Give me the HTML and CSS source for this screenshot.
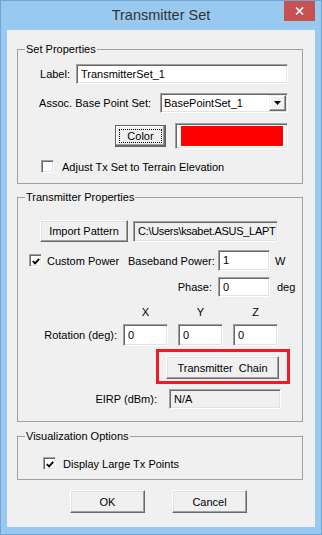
FILE: index.html
```html
<!DOCTYPE html>
<html>
<head>
<meta charset="utf-8">
<title>Transmitter Set</title>
<link rel="stylesheet" href="styles.css">
</head>
<body>
<div class="window">
  <div class="titlebar">
    <div class="title">Transmitter Set</div>
    <div class="close">
      <svg width="9" height="8" viewBox="0 0 9 8"><path d="M1 0.5 L8 7.5 M8 0.5 L1 7.5" stroke="#fff" stroke-width="1.7" fill="none"/></svg>
    </div>
  </div>

  <div class="client">
    <!-- set properties -->
    <fieldset class="group">
      <legend>Set Properties</legend>
      <div class="row row-label">
        <span class="lbl lbl-label">Label:</span>
        <div class="edit edit-label">TransmitterSet_1</div>
      </div>
      <div class="row row-base">
        <span class="lbl lbl-base">Assoc. Base Point Set:</span>
        <div class="combo">
          <span class="combo-text">BasePointSet_1</span>
          <span class="combo-btn"><svg width="7" height="4" viewBox="0 0 7 4"><path d="M0 0 H7 L3.5 4 Z" fill="#000"/></svg></span>
        </div>
      </div>
      <div class="row row-color">
        <div class="btn btn-color"><span class="focus">Color</span></div>
        <div class="swatch"><div class="swatch-fill"></div></div>
      </div>
      <div class="row row-adjust">
        <span class="check"></span>
        <span>Adjust Tx Set to Terrain Elevation</span>
      </div>
    </fieldset>

    <!-- transmitter properties -->
    <fieldset class="group group-tx">
      <legend>Transmitter Properties</legend>
      <div class="row row-import">
        <div class="btn btn-import">Import Pattern</div>
        <div class="path">C:\Users\ksabet.ASUS_LAPT</div>
      </div>
      <div class="row row-power">
        <div class="power-check">
          <span class="check"><svg width="11" height="11" viewBox="0 0 11 11"><path d="M2 5 L4.5 7.5 L9 2.5" stroke="#000" stroke-width="2" fill="none"/></svg></span>
          <span>Custom Power</span>
        </div>
        <span class="lbl lbl-power">Baseband Power:</span>
        <div class="edit edit-power">1</div>
        <span class="unit">W</span>
      </div>
      <div class="row row-phase">
        <span class="lbl lbl-power">Phase:</span>
        <div class="edit edit-phase">0</div>
        <span class="unit unit-deg">deg</span>
      </div>
      <div class="row row-xyz">
        <span class="axis">X</span>
        <span class="axis">Y</span>
        <span class="axis">Z</span>
      </div>
      <div class="row row-rot">
        <span class="lbl lbl-rot">Rotation (deg):</span>
        <div class="edit edit-rot">0</div>
        <div class="edit edit-rot">0</div>
        <div class="edit edit-rot">0</div>
      </div>
      <div class="row row-chain">
        <div class="mark">
          <div class="btn btn-chain">Transmitter&nbsp; Chain</div>
        </div>
      </div>
      <div class="row row-eirp">
        <span class="lbl lbl-eirp">EIRP (dBm):</span>
        <div class="na">N/A</div>
      </div>
    </fieldset>

    <!-- visualization -->
    <fieldset class="group group-vis">
      <legend>Visualization Options</legend>
      <div class="row row-vis">
        <span class="check"><svg width="11" height="11" viewBox="0 0 11 11"><path d="M2 5 L4.5 7.5 L9 2.5" stroke="#000" stroke-width="2" fill="none"/></svg></span>
        <span>Display Large Tx Points</span>
      </div>
    </fieldset>

    <div class="row row-buttons">
      <div class="btn btn-dlg">OK</div>
      <div class="btn btn-dlg">Cancel</div>
    </div>
  </div>
</div>
</body>
</html>
```

FILE: styles.css
```css
*{ margin:0; padding:0; box-sizing:border-box; }
body{ font:11px "Liberation Sans", Arial, sans-serif; color:#000; }

.window{
  width:322px;
  height:535px;
  background:#99c9ef;
  border:1px solid #6fa4d4;
  padding:0 6px 7px;
  display:flex;
  flex-direction:column;
}
.titlebar{ height:29px; margin:0 -6px; display:grid; grid-template-columns:1fr auto 1fr; }
.title{ grid-column:2; font-size:14.5px; line-height:29px; color:#333; }
.close{
  grid-column:3; justify-self:end; align-self:start;
  width:31px; height:20px; margin-right:6px;
  background:#c75050;
  display:flex; align-items:center; justify-content:center;
}

.client{ flex:1; background:#f0f0f0; padding-top:12px; }

.group{ border:1px solid #a0a0a0; margin:0 12px 0 10px; padding:0 0 10px; min-width:0; }
.group legend{ margin-left:7px; padding:0 1px; line-height:14px; }
.group-tx{ margin-top:6px; padding-bottom:12px; }
.group-vis{ margin-top:7px; padding-bottom:9px; }

.row{ display:flex; align-items:center; }
.lbl{ text-align:right; white-space:nowrap; }

/* sunken edit box */
.edit, .combo, .path, .na, .swatch{
  border:1px solid;
  border-color:#a0a0a0 #fff #fff #a0a0a0;
  box-shadow:inset 1px 1px 0 #696969, inset -1px -1px 0 #e3e3e3;
}
.edit{ background:#fff; height:20px; line-height:18px; padding-left:4px; white-space:nowrap; }

/* raised button */
.btn{
  display:flex; align-items:center; justify-content:center;
  background:#f0f0f0;
  border:1px solid;
  border-color:#fff #696969 #696969 #fff;
  box-shadow:inset -1px -1px 0 #a0a0a0, inset 1px 1px 0 #e3e3e3;
  white-space:nowrap;
}

.check{
  width:13px; height:13px; flex:none;
  background:#fff;
  border:1px solid;
  border-color:#a0a0a0 #fff #fff #a0a0a0;
  box-shadow:inset 1px 1px 0 #696969, inset -1px -1px 0 #e3e3e3;
  display:flex; align-items:center; justify-content:center;
}
.check svg{ display:block; margin:1px 0 0 1px; }

/* set properties */
.row-label{ margin-top:8px; }
.lbl-label{ width:52px; margin-right:6px; }
.edit-label{ width:212px; }

.row-base{ margin-top:9px; }
.lbl-base{ width:133px; margin-right:9px; }
.combo{ width:128px; height:20px; background:#fff; padding:1px; display:flex; }
.combo-text{ flex:1; line-height:16px; padding-left:2px; }
.combo-btn{
  width:17px; background:#f0f0f0;
  border:1px solid; border-color:#f0f0f0 #696969 #696969 #f0f0f0;
  box-shadow:inset -1px -1px 0 #a0a0a0, inset 1px 1px 0 #fff;
  display:flex; align-items:center; justify-content:center;
}

.row-color{ margin-top:10px; padding-left:97px; gap:9px; }
.btn-color{
  width:51px; height:22px; padding:3px;
  border:1px solid #646464;
  box-shadow:inset -1px -1px 0 #696969, inset -2px -2px 0 #a0a0a0, inset 1px 1px 0 #fff;
}
.focus{ flex:1; align-self:stretch; border:1px dotted #000; display:flex; align-items:center; justify-content:center; }
.swatch{ width:113px; height:26px; background:#fff; padding:2px 4px 2px 5px; }
.swatch-fill{ height:100%; background:#f00; }

.row-adjust{ margin-top:11px; padding-left:23px; gap:8px; }

/* transmitter properties */
.row-import{ margin-top:16px; padding-left:22px; gap:5px; }
.btn-import{ width:88px; height:22px; }
.path{
  width:145px; height:21px; line-height:19px; padding-left:4px;
  overflow:hidden; white-space:nowrap; letter-spacing:-0.3px;
  background:#f0f0f0;
}

.row-power{ margin-top:8px; padding-left:11px; }
.power-check{ width:99px; display:flex; align-items:center; gap:5px; }
.lbl-power{ width:84px; margin-right:6px; }
.edit-power{ width:52px; height:21px; line-height:19px; }
.unit{ margin-left:5px; }

.row-phase{ margin-top:6px; padding-left:110px; }
.edit-phase{ width:52px; }
.unit-deg{ margin-left:7px; }

.row-xyz{ margin-top:9px; padding-left:105px; gap:10px; line-height:13px; }
.axis{ width:45px; text-align:center; }

.row-rot{ margin-top:5px; gap:10px; }
.lbl-rot{ width:99px; margin-right:-4px; }
.edit-rot{ width:45px; height:22px; line-height:20px; }

.row-chain{ margin-top:3px; padding-left:138px; }
.mark{ border:3px solid #ed1c24; padding:4px 8px 2px 7px; }
.btn-chain{ width:113px; height:23px; }

.row-eirp{ margin-top:5px; }
.lbl-eirp{ width:139px; margin-right:12px; }
.na{ width:112px; height:20px; line-height:18px; padding-left:4px; background:#f0f0f0; }

/* visualization */
.row-vis{ margin-top:14px; padding-left:25px; gap:7px; }

.row-buttons{ margin-top:10px; padding-left:63px; gap:27px; }
.btn-dlg{ width:75px; height:23px; }
```
